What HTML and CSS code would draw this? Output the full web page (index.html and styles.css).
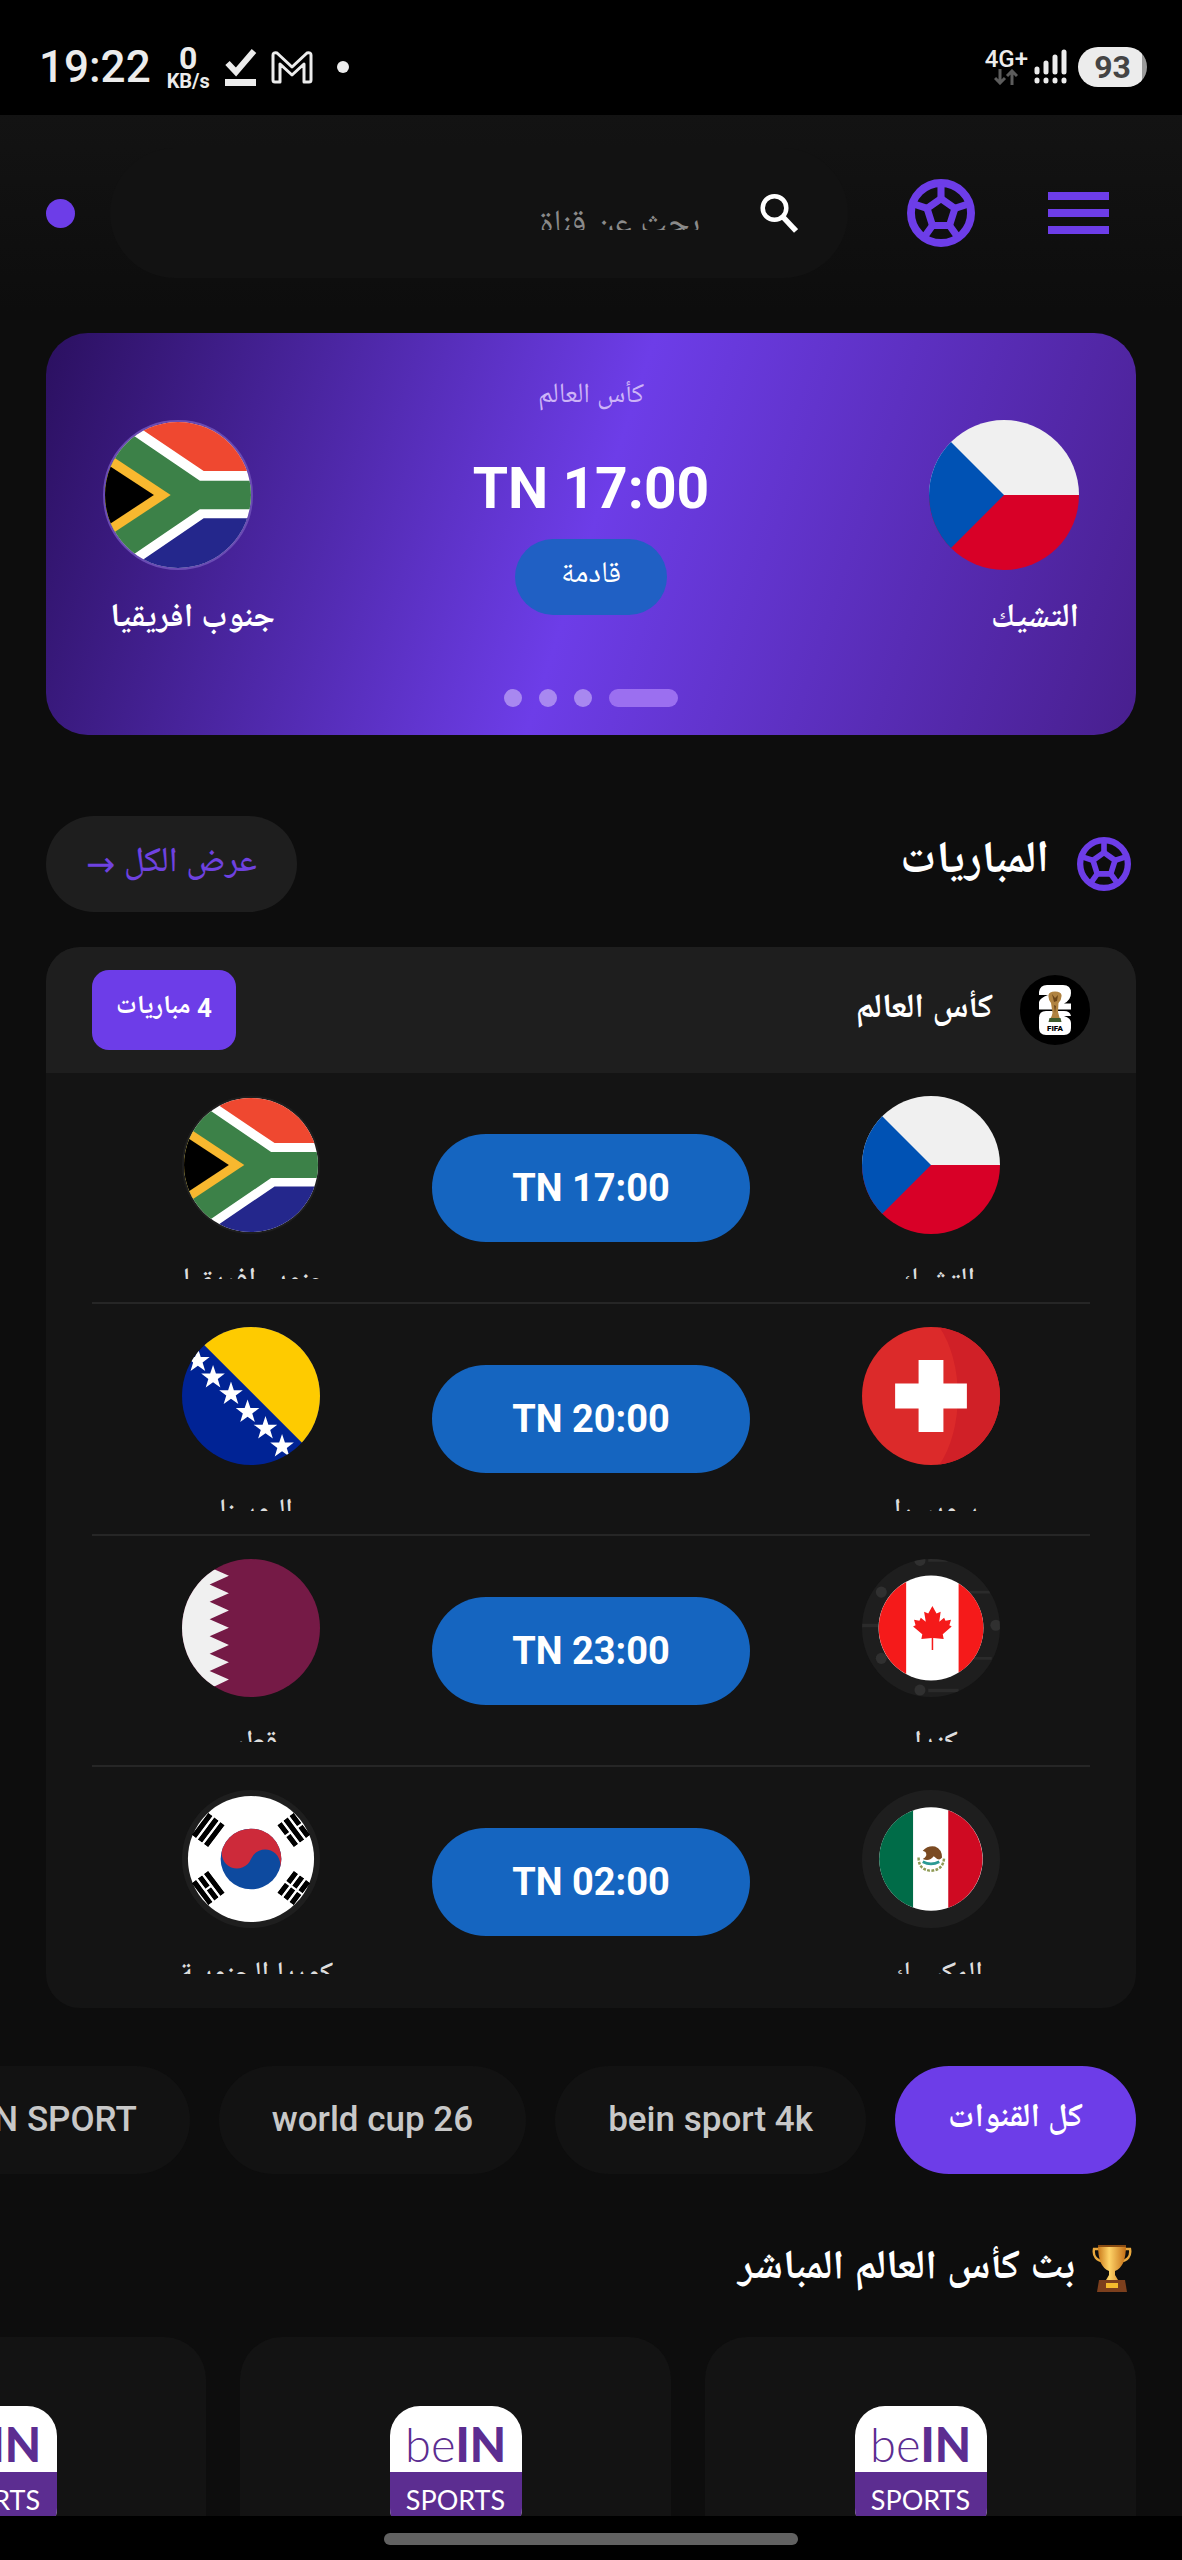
FILE: index.html
```html
<!DOCTYPE html>
<html lang="ar" dir="rtl">
<head>
<meta charset="utf-8">
<meta name="viewport" content="width=device-width, initial-scale=1">
<title>المباريات</title>
<link rel="stylesheet" href="styles.css">
</head>
<body>
<svg class="defs" aria-hidden="true">
  <symbol id="ball" viewBox="0 0 24 24">
    <g fill="none" stroke="currentColor" stroke-width="2.5" stroke-linejoin="round">
      <circle cx="12" cy="12" r="10.600" stroke-width="2.800"/>
      <path d="M12 6.900 16.900 10.400 15 16.400H9L7.100 10.400Z"/>
      <path d="M12 6.900V2M16.900 10.400 22 8.700M15 16.400 18 20.600M9 16.400 6 20.600M7.100 10.400 2 8.700"/>
    </g>
  </symbol>
  <symbol id="flag-za" viewBox="0 0 100 100">
    <rect width="100" height="100" fill="#fff"/>
    <path d="M0-12 67.600 33.600H100V0H0Z" fill="#ef4830"/>
    <path d="M0 112 67.600 66H100V100H0Z" fill="#24278c"/>
    <path d="M0-4 65 40.300H100V59.700H65L0 104Z" fill="#3c8148"/>
    <path d="M0 20.200 45 50 0 79.800Z" fill="#f8b82f"/>
    <path d="M0 28 33.500 50 0 72Z" fill="#000"/>
  </symbol>
  <symbol id="flag-cz" viewBox="0 0 100 100">
    <rect width="100" height="50" fill="#f0f0f0"/>
    <rect y="50" width="100" height="50" fill="#d80027"/>
    <path d="M0 0 50 50 0 100Z" fill="#0052b4"/>
  </symbol>
  <symbol id="star" viewBox="-10 -10 20 20">
    <path d="M0-9.500 2.200-2.900H9L3.600 1.200 5.600 7.700 0 3.700-5.600 7.700-3.600 1.200-9-2.900H-2.200Z" fill="#fff"/>
  </symbol>
  <symbol id="flag-ba" viewBox="0 0 100 100">
    <rect width="100" height="100" fill="#002395"/>
    <path d="M3 0 100 97V0Z" fill="#fecb00"/>
    <use href="#star" x="2" y="15" width="19" height="19"/>
    <use href="#star" x="13" y="27" width="19" height="19"/>
    <use href="#star" x="26" y="39" width="19" height="19"/>
    <use href="#star" x="38" y="52" width="19" height="19"/>
    <use href="#star" x="51" y="64" width="19" height="19"/>
    <use href="#star" x="63" y="77" width="19" height="19"/>
  </symbol>
  <symbol id="flag-ch" viewBox="0 0 100 100">
    <rect width="100" height="100" fill="#dc2a2a"/>
    <path d="M56 0C74 26 74 74 56 100H100V0Z" fill="#d02027"/>
    <path d="M41 24H59V41H76V59H59V76H41V59H24V41H41Z" fill="#fff"/>
  </symbol>
  <symbol id="flag-qa" viewBox="0 0 100 100">
    <rect width="100" height="100" fill="#751a46"/>
    <path d="M0 0H34L20 6 34 12.200 20 18.500 34 24.800 20 31 34 37.300 20 43.600 34 49.800 20 56 34 62.400 20 68.600 34 74.900 20 81.200 34 87.400 20 94 34 100H0Z" fill="#f0f0f0"/>
  </symbol>
  <symbol id="flag-ca" viewBox="0 0 100 100">
    <rect width="100" height="100" fill="#1e1e1e"/>
    <g fill="#303030">
      <circle cx="14" cy="24" r="4"/><circle cx="42" cy="1" r="4"/><circle cx="14" cy="72" r="4"/><circle cx="42" cy="95" r="4"/><circle cx="97" cy="48" r="4"/>
      <path d="M48 0H62V2H48ZM48 94H70V96.500H48ZM0 47H12V49.500H0ZM76 23H93V25H76ZM76 71H94V73H76Z" opacity=".7"/>
    </g>
    <circle cx="50" cy="50" r="38" fill="#fff"/>
    <path d="M32 16.600A38 38 0 0 0 32 83.400ZM70 17.700A38 38 0 0 1 70 82.300Z" fill="#f51a1a"/>
    <path d="M51 34 54 39.500 57 38.200 56 45.500 59.500 42.500 60.500 44.800 64.500 44 63.300 48 65 49 58.500 54.500 59.200 58 51.600 57.200V66H50.500V57.200L43 58 43.700 54.500 37 49 38.800 48 37.700 44 41.600 44.800 42.600 42.500 46.200 45.500 45 38.200 48 39.500Z" fill="#f51a1a"/>
  </symbol>
  <symbol id="flag-mx" viewBox="0 0 100 100">
    <rect width="100" height="100" fill="#1e1e1e"/>
    <circle cx="50" cy="50" r="37.500" fill="#fff"/>
    <path d="M37 14.800A37.500 37.500 0 0 0 37 85.200Z" fill="#006c48"/>
    <path d="M62.500 14.700A37.500 37.500 0 0 1 62.500 85.300Z" fill="#cf0a22"/>
    <path d="M41 49Q41 58 50 58.500 59 58 59.500 49" fill="none" stroke="#8f9a55" stroke-width="1.800" stroke-dasharray="2 1"/>
    <path d="M44 44Q48 40 53 41 58 43 58 49 56 52 52 48 49 52 44 50 48 48 46 45Z" fill="#7a4a22"/>
    <path d="M44 52Q50 55 56 52" fill="none" stroke="#2b9a94" stroke-width="2"/>
  </symbol>
  <symbol id="bar-solid" viewBox="0 0 20 4"><path d="M0 0H20V4H0Z"/></symbol>
  <symbol id="bar-broken" viewBox="0 0 20 4"><path d="M0 0H9.200V4H0ZM10.800 0H20V4H10.800Z"/></symbol>
  <symbol id="flag-kr" viewBox="0 0 100 100">
    <rect width="100" height="100" fill="#1e1e1e"/>
    <circle cx="50" cy="50" r="45.700" fill="#fff"/>
    <circle cx="50" cy="50" r="22" fill="#0d4a9f"/>
    <path transform="rotate(22 50 50)" d="M28 50A22 22 0 0 1 72 50A11 11 0 0 0 50 50A11 11 0 0 1 28 50Z" fill="#cd2a3a"/>
    <g fill="#000">
      <g transform="translate(19 29) rotate(-53)"><use href="#bar-solid" x="-10" y="-7.500" width="20" height="4"/><use href="#bar-solid" x="-10" y="-2" width="20" height="4"/><use href="#bar-solid" x="-10" y="3.500" width="20" height="4"/></g>
      <g transform="translate(81 29) rotate(53)"><use href="#bar-broken" x="-10" y="-7.500" width="20" height="4"/><use href="#bar-solid" x="-10" y="-2" width="20" height="4"/><use href="#bar-broken" x="-10" y="3.500" width="20" height="4"/></g>
      <g transform="translate(19 71) rotate(53)"><use href="#bar-solid" x="-10" y="-7.500" width="20" height="4"/><use href="#bar-broken" x="-10" y="-2" width="20" height="4"/><use href="#bar-solid" x="-10" y="3.500" width="20" height="4"/></g>
      <g transform="translate(81 71) rotate(-53)"><use href="#bar-broken" x="-10" y="-7.500" width="20" height="4"/><use href="#bar-broken" x="-10" y="-2" width="20" height="4"/><use href="#bar-broken" x="-10" y="3.500" width="20" height="4"/></g>
    </g>
  </symbol>
</svg>

<div class="screen">
  <div class="status" dir="ltr">
    <span class="clock">19:22</span>
    <span class="net"><b class="net-num">0</b><b class="net-unit">KB/s</b></span>
    <svg class="st-check" viewBox="0 0 32 38"><path d="M2.500 15 11 24 29 3" fill="none" stroke="#ececec" stroke-width="6"/><path d="M0 31H31V38H0Z" fill="#ececec"/></svg>
    <svg class="st-mail" viewBox="0 0 42 34"><path d="M2 30V5Q2 2 6 3L21 17 36 3Q40 2 40 5V30Q40 32 38 32H33V14L21 25 9 14V32H4Q2 32 2 30Z" fill="none" stroke="#ececec" stroke-width="3" stroke-linejoin="round"/></svg>
    <span class="st-dot"></span>
    <span class="spacer"></span>
    <span class="cell"><b class="cell-type">4G+</b><svg width="24" height="16" viewBox="0 0 24 16"><path d="M6 0V14M1 9 6 14 11 9M18 16V2M13 7 18 2 23 7" fill="none" stroke="#5c5c5c" stroke-width="3"/></svg></span>
    <svg class="st-signal" viewBox="0 0 34 36"><g stroke="#ececec" stroke-width="5" stroke-linecap="round"><path d="M3 20V23M12 14V23M21 8V23M30 3V23M3 31V32M12 31V32M21 31V32M30 31V32"/></g></svg>
    <span class="battery">93</span>
  </div>

  <header class="topbar">
    <button class="icon-btn" aria-label="القائمة"><svg width="61" height="42" viewBox="0 0 61 42"><path d="M0 0H61V8H0ZM0 17H61V25H0ZM0 34H61V42H0Z" fill="currentColor"/></svg></button>
    <button class="icon-btn" aria-label="المباريات"><svg width="68" height="68"><use href="#ball"/></svg></button>
    <form class="search" role="search">
      <svg width="38" height="40" viewBox="0 0 38 40"><circle cx="14.500" cy="15" r="11.800" fill="none" stroke="#fff" stroke-width="4.500"/><path d="M23 24 36 38" stroke="#fff" stroke-width="5.500"/></svg>
      <label class="search-field"><input class="search-input" type="text" aria-label="بحث عن قناة" placeholder="بحث عن قناة"></label>
    </form>
    <span class="live-dot"></span>
  </header>

  <main class="content">
    <section class="banner">
      <div class="banner-team">
        <svg class="banner-flag"><use href="#flag-cz"/></svg>
        <span class="banner-name">التشيك</span>
      </div>
      <div class="banner-mid">
        <span class="banner-league">كأس العالم</span>
        <span class="banner-time" dir="ltr">TN 17:00</span>
        <span class="banner-state">قادمة</span>
        <div class="pager"><i class="page on"></i><i class="page"></i><i class="page"></i><i class="page"></i></div>
      </div>
      <div class="banner-team far">
        <svg class="banner-flag ring"><use href="#flag-za"/></svg>
        <span class="banner-name">جنوب افريقيا</span>
      </div>
    </section>

    <div class="section-head">
      <svg class="section-icon"><use href="#ball"/></svg>
      <h2 class="section-title">المباريات</h2>
      <a class="view-all" href="#all">عرض الكل <span class="arrow">→</span></a>
    </div>

    <section class="matches">
      <div class="league">
        <svg class="league-logo" viewBox="0 0 70 70">
          <circle cx="35" cy="35" r="35" fill="#000"/>
          <path d="M19 17Q20 10 27 10H43Q51 10 51 18 51 25 44 28.500H51V34.500H19V27Q20 23 28 20H19ZM19 43Q19 36 26 36H44Q50 36 51 41H44Q51 43 51 48V53Q51 60 44 60H26Q19 60 19 53Z" fill="#fff"/>
          <path d="M28.500 20Q29 16.500 35 16.500 41 16.500 41.500 20 42 24 38.500 28L38 37Q39 41 40 44H30Q32 41 32.500 38L31 28Q28 24 28.500 20Z" fill="#b08341"/>
          <path d="M32 19 35 23 38 20 37 26 34 27ZM34 30 36 31 35 38Z" fill="#6b4518"/>
          <path d="M29.500 43H40.500L41.500 47H28.500Z" fill="#3f5b2c"/>
          <text x="35" y="56" text-anchor="middle" class="league-mark">FIFA</text>
        </svg>
        <h3 class="league-name">كأس العالم</h3>
        <span class="league-count">4 مباريات</span>
      </div>
      <div class="match">
        <div class="team"><svg class="flag"><use href="#flag-cz"/></svg><span class="team-name">التشيك</span></div>
        <button class="kickoff" dir="ltr">TN 17:00</button>
        <div class="team"><svg class="flag ring-dark"><use href="#flag-za"/></svg><span class="team-name">جنوب افريقيا</span></div>
      </div>
      <div class="match">
        <div class="team"><svg class="flag"><use href="#flag-ch"/></svg><span class="team-name">سويسرا</span></div>
        <button class="kickoff" dir="ltr">TN 20:00</button>
        <div class="team"><svg class="flag"><use href="#flag-ba"/></svg><span class="team-name">البوسنا</span></div>
      </div>
      <div class="match">
        <div class="team"><svg class="flag"><use href="#flag-ca"/></svg><span class="team-name">كندا</span></div>
        <button class="kickoff" dir="ltr">TN 23:00</button>
        <div class="team"><svg class="flag"><use href="#flag-qa"/></svg><span class="team-name">قطر</span></div>
      </div>
      <div class="match">
        <div class="team"><svg class="flag"><use href="#flag-mx"/></svg><span class="team-name">المكسيك</span></div>
        <button class="kickoff" dir="ltr">TN 02:00</button>
        <div class="team"><svg class="flag"><use href="#flag-kr"/></svg><span class="team-name">كوريا الجنوبية</span></div>
      </div>
    </section>

    <nav class="chips">
      <button class="chip active">كل القنوات</button>
      <button class="chip" dir="ltr">bein sport 4k</button>
      <button class="chip" dir="ltr">world cup 26</button>
      <button class="chip" dir="ltr">beIN SPORT</button>
    </nav>

    <div class="live-head">
      <svg class="trophy" viewBox="0 0 40 48">
        <defs><linearGradient id="gold"><stop offset="0" stop-color="#c9791a"/><stop offset=".4" stop-color="#ffd468"/><stop offset="1" stop-color="#c46f17"/></linearGradient></defs>
        <path d="M7 5H2Q0 16 13 18M33 5H38Q40 16 27 18" fill="none" stroke="#e9a83e" stroke-width="2.400"/>
        <path d="M6 1H34Q34 23 23 27V31L26 36H14L17 31V27Q6 23 6 1Z" fill="url(#gold)"/>
        <path d="M6 1H34V3H6Z" fill="#8a4c12"/>
        <path d="M7 36H33L35 48H5Z" fill="#7c3f1d"/>
        <path d="M14 39H26V44H14Z" fill="#f4bb2d"/>
      </svg>
      <h2 class="live-title">بث كأس العالم المباشر</h2>
    </div>

    <div class="channels">
      <a class="channel" href="#ch1"><span class="bein" dir="ltr"><span class="bein-top">be<b>IN</b></span><span class="bein-sub">SPORTS</span></span></a>
      <a class="channel" href="#ch2"><span class="bein" dir="ltr"><span class="bein-top">be<b>IN</b></span><span class="bein-sub">SPORTS</span></span></a>
      <a class="channel" href="#ch3"><span class="bein" dir="ltr"><span class="bein-top">be<b>IN</b></span><span class="bein-sub">SPORTS</span></span></a>
    </div>
  </main>

  <div class="gesture"><span class="handle"></span></div>
</div>
</body>
</html>
```
FILE: styles.css
```css
* { box-sizing: border-box; }
body {
  margin: 0;
  background: #0d0d0d;
  color: #fff;
  font-family: Roboto, "Noto Naskh Arabic UI", "Noto Naskh Arabic", "Noto Sans Arabic", sans-serif;
}
h2, h3 { margin: 0; }
button { border: 0; padding: 0; color: inherit; font: inherit; background: none; }
a { color: inherit; text-decoration: none; }
svg { flex: none; display: block; }
.defs { width: 0; height: 0; position: absolute; }

.screen { display: flex; flex-direction: column; height: 100vh; overflow: hidden; }

/* status bar */
.status {
  display: flex; align-items: center; flex: none;
  height: 115px; padding: 18px 35px 0 39px;
  background: #000; color: #ececec;
}
.clock { font-size: 44px; line-height: 48px; font-weight: 500; }
.net { display: flex; flex-direction: column; align-items: center; margin-left: 16px; }
.net-num { font-size: 32px; line-height: 28px; }
.net-unit { font-size: 20px; line-height: 18px; }
.st-check { width: 32px; height: 38px; margin-left: 15px; }
.st-mail { width: 42px; height: 34px; margin-left: 14px; }
.st-dot { width: 12px; height: 12px; margin-left: 24px; border-radius: 50%; background: #ececec; }
.spacer { flex: 1; }
.cell { display: flex; flex-direction: column; align-items: center; }
.cell-type { font-size: 24px; line-height: 20px; font-weight: 500; }
.st-signal { width: 34px; height: 36px; margin-left: 6px; }
.battery {
  width: 69px; height: 40px; margin-left: 10px; border-radius: 20px;
  background: linear-gradient(90deg, #ececec 93%, #9a9a9a 93%);
  color: #444; font-size: 32px; line-height: 40px; font-weight: 700; text-align: center;
}

/* top bar */
.topbar {
  display: flex; align-items: center; flex: none;
  height: 196px; padding: 0 46px;
  background: linear-gradient(#131313, #0d0d0d);
}
.icon-btn {
  display: flex; align-items: center; justify-content: center;
  width: 115px; height: 115px; margin-left: 23px; color: #6d3de8;
}
.search {
  display: flex; align-items: center; flex: 1;
  height: 130px; margin-left: 35px; margin-right: 12px; padding: 0 50px;
  border-radius: 65px; background: #121212;
}
.search-field { display: block; flex: 1; min-width: 0; height: 34px; margin-right: 60px; overflow: hidden; }
.search-input {
  display: block; width: 100%; height: 60px; padding: 0; border: 0;
  background: none; color: #fff; font: inherit; font-size: 34px;
}
.search-input::placeholder { color: #8a8a8a; opacity: 1; }
.live-dot { width: 29px; height: 29px; border-radius: 50%; background: #6d3de8; }

/* banner */
.content { flex: 1; min-height: 0; overflow: hidden; padding: 22px 46px 0; }
.banner {
  display: flex; justify-content: space-between;
  height: 402px; padding: 0 57px; border-radius: 42px;
  background: linear-gradient(108deg, #2b1060, #6d3de8 50%, #481f8e);
}
.banner-team { display: flex; flex-direction: column; width: 172px; padding-top: 87px; }
.banner-team.far .banner-flag { align-self: flex-end; }
.banner-flag { width: 150px; height: 150px; border-radius: 50%; }
.ring { border: 2px solid #6a4bb4; }
.banner-name { margin-top: 28px; font-size: 33px; line-height: 44px; font-weight: 700; white-space: nowrap; }
.banner-mid { display: flex; flex-direction: column; align-items: center; }
.banner-league { margin-top: 44px; font-size: 28px; line-height: 40px; color: #cdb4f7; }
.banner-time { margin-top: 37px; font-size: 57px; line-height: 70px; font-weight: 700; }
.banner-state {
  height: 76px; margin-top: 15px; padding: 0 46px; border-radius: 38px;
  background: #2060c4; font-size: 30px; line-height: 74px;
}
.pager { display: flex; gap: 17px; margin-top: 74px; }
.page { width: 18px; height: 18px; border-radius: 9px; background: #a888f0; }
.page.on { width: 69px; background: #9b6ff0; }

/* matches */
.section-head { display: flex; align-items: center; height: 96px; margin-top: 81px; padding-right: 5px; }
.section-icon { width: 54px; height: 54px; color: #6d3de8; }
.section-title { height: 60px; margin-right: 28px; font-size: 45px; line-height: 58px; font-weight: 700; }
.view-all {
  height: 96px; margin-right: auto; padding: 0 40px; border-radius: 48px;
  background: #1e1e1e; color: #6f42e0; font-size: 35px; line-height: 93px; font-weight: 500;
}
.arrow { font-family: "Noto Sans", "DejaVu Sans", sans-serif; }
.matches { margin-top: 35px; padding-bottom: 9px; border-radius: 34px; background: #141414; overflow: hidden; }
.league { display: flex; align-items: center; height: 126px; padding: 0 46px; background: #1e1e1e; }
.league-logo { width: 70px; height: 70px; }
.league-mark { font: 900 8px Roboto, sans-serif; fill: #000; }
.league-name { height: 46px; margin-right: 27px; font-size: 34px; line-height: 46px; font-weight: 700; }
.league-count {
  height: 80px; margin-right: auto; padding: 0 24px; border-radius: 17px;
  background: #6d3de8; font-size: 26px; line-height: 76px; font-weight: 700;
}
.match {
  display: flex; justify-content: space-between;
  height: 231px; margin: 0 46px; padding: 23px 0; border-bottom: 2px solid #262626;
}
.match:nth-child(odd) { height: 232px; }
.match:last-child { border-bottom: 0; }
.team { display: flex; flex-direction: column; align-items: center; width: 318px; }
.flag { width: 138px; height: 138px; border-radius: 50%; }
.ring-dark { border: 2px solid #1e1e1e; }
.team-name { height: 24px; margin-top: 22px; margin-left: 10px; overflow: hidden; font-size: 30px; line-height: 52px; color: #ddd; font-weight: 500; white-space: nowrap; }
.kickoff {
  width: 318px; height: 108px; margin-top: 38px; border-radius: 54px;
  background: #1565c0; font-size: 38px; line-height: 108px; font-weight: 700;
}

/* channels */
.chips { display: flex; gap: 29px; margin: 58px -46px 0; padding-right: 46px; overflow: hidden; }
.chip {
  flex: none; height: 108px; padding: 0 53px; border-radius: 54px;
  background: #121212; color: #c8c8c8; font-size: 35px; line-height: 108px; font-weight: 500; white-space: nowrap;
}
.chip.active { background: #6d3de8; color: #fff; font-size: 33px; line-height: 104px; font-weight: 700; }
.live-head { display: flex; align-items: center; height: 60px; margin-top: 64px; padding-right: 4px; }
.trophy { width: 40px; height: 48px; }
.live-title { height: 60px; margin-right: 17px; font-size: 41px; line-height: 64px; font-weight: 700; }
.channels { display: flex; gap: 34px; margin: 39px -46px 0; padding-right: 46px; overflow: hidden; }
.channel {
  display: flex; justify-content: center; flex: none;
  width: 431px; padding: 69px 0; border-radius: 42px; background: #131313;
}
.bein {
  display: flex; flex-direction: column; width: 132px; height: 132px;
  border-radius: 30px; overflow: hidden; background: #fff; color: #5c2d91;
  font-family: Lato, sans-serif; text-align: center;
}
.bein-top { height: 66px; font-size: 47px; line-height: 76px; font-weight: 300; }
.bein-top b { font-weight: 900; }
.bein-sub { flex: 1; background: #5c2d91; color: #fff; font-size: 27px; line-height: 56px; }

/* gesture bar */
.gesture { display: flex; justify-content: center; flex: none; height: 44px; padding-top: 17px; background: #000; }
.handle { width: 35%; height: 12px; border-radius: 6px; background: #616161; }
```
